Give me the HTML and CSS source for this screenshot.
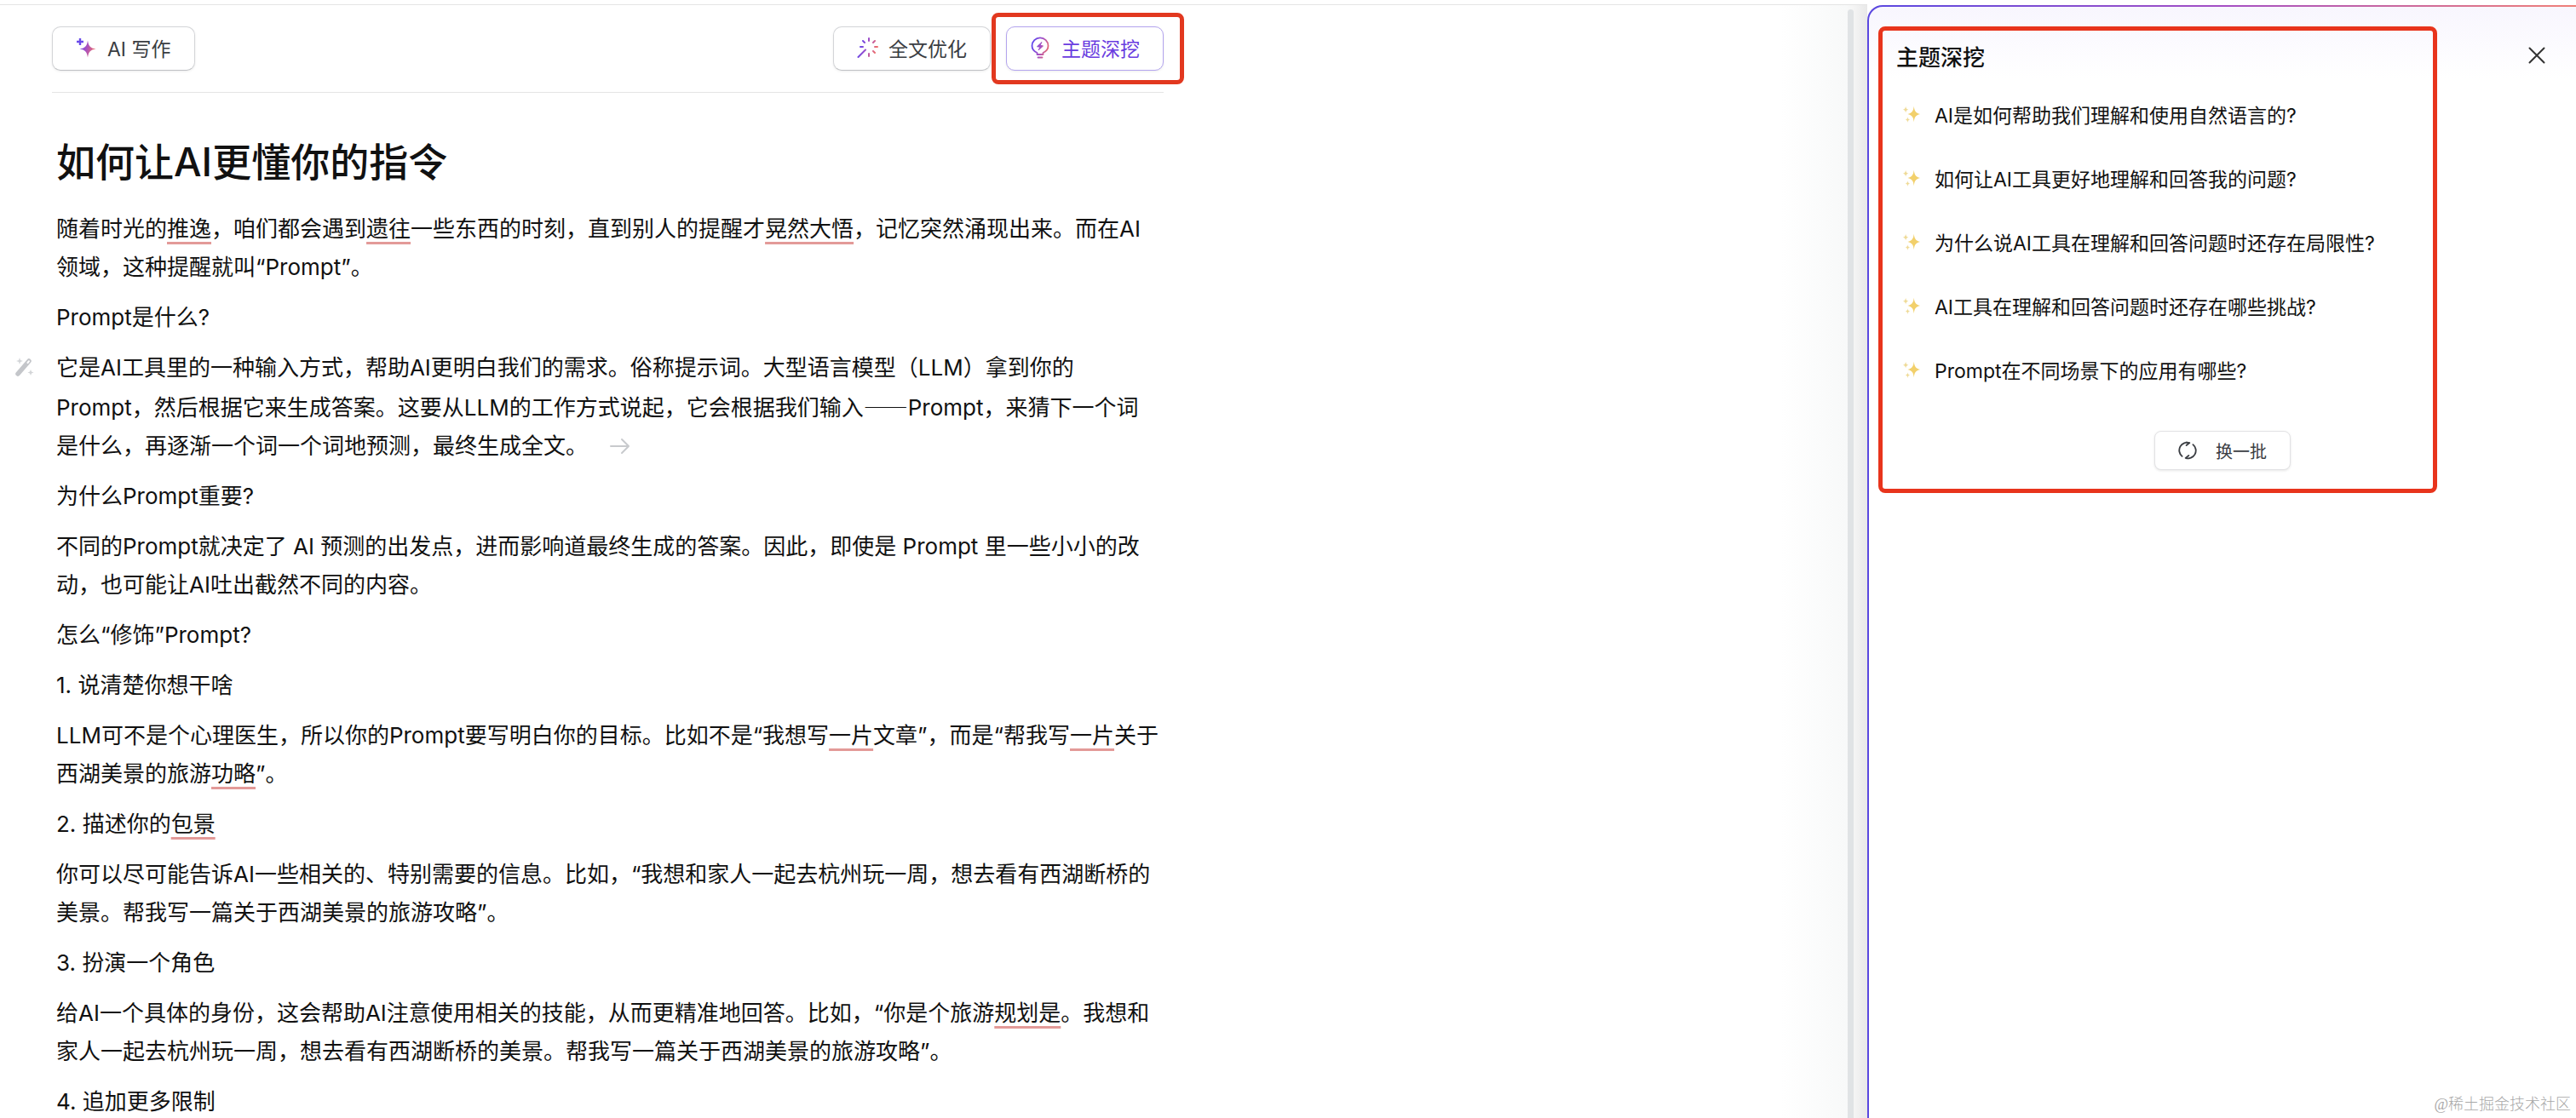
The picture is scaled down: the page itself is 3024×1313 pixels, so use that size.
FILE: index.html
```
<!DOCTYPE html>
<html lang="zh-CN">
<head>
  <meta charset="UTF-8" />
  <meta name="viewport" content="width=device-width, initial-scale=1.0"/>
  <title>如何让AI更懂你的指令</title>
  <link rel="stylesheet" href="styles.css">
</head>
<body>
  <!-- shared gradient and sparkle shape -->
  <svg class="defs" width="0" height="0" aria-hidden="true">
    <defs>
      <linearGradient id="brand" gradientUnits="userSpaceOnUse" x1="2" y1="8" x2="23" y2="14">
        <stop offset="0" stop-color="#5b45f0"/>
        <stop offset="0.5" stop-color="#a44fc4"/>
        <stop offset="1" stop-color="#f0706a"/>
      </linearGradient>
      <symbol id="sparkles" viewBox="0 0 24 24">
        <path fill="#f2d06b" d="M15 2c.8 6.200 2.200 8.600 8 10-5.800 1.400-7.200 3.800-8 10-.8-6.200-2.200-8.600-8-10 5.800-1.400 7.200-3.800 8-10z"/>
        <path fill="#efdb98" d="M4.500 2c.4 2.800 1.100 3.600 3.500 4.200-2.400.6-3.100 1.400-3.500 4.200C4.100 7.600 3.400 6.800 1 6.200 3.400 5.600 4.100 4.800 4.500 2z"/>
        <path fill="#efdb98" d="M7 15.500c.4 2.400 1 3.200 3 3.700-2 .5-2.600 1.300-3 3.700-.4-2.400-1-3.200-3-3.700 2-.5 2.600-1.300 3-3.700z"/>
      </symbol>
    </defs>
  </svg>

  <div class="app">
    <main class="editor">
      <div class="toolbar">
        <button class="btn" type="button">
          <svg class="icon" viewBox="0 0 24 24">
            <path fill="url(#brand)" d="M14 3.500c1 6.500 2.800 9 9.500 10-6.700 1-8.500 3.500-9.500 10-1-6.500-2.800-9-9.500-10 6.700-1 8.500-3.500 9.500-10z"/>
            <path fill="none" stroke="#6a4bea" stroke-width="2.400" d="M5 1v8M1 5h8"/>
          </svg>
          AI 写作
        </button>
        <div class="tools">
          <button class="btn" type="button">
            <svg class="icon" viewBox="0 0 24 24">
              <path fill="none" stroke="url(#brand)" stroke-width="2" stroke-linecap="round" d="M1.500 23l8.500-8.500M14 1v3M14 19v3M4 11h3M21 11.010h3M7 4l2 2M21 4l-2 2M21 18l-2-2"/>
            </svg>
            全文优化
          </button>
          <div class="mark">
            <button class="btn btn-active" type="button">
              <svg class="icon" viewBox="0 0 24 24">
                <path fill="none" stroke="url(#brand)" stroke-width="1.800" stroke-linecap="round" stroke-linejoin="round" d="M8.500 20v-2C5 16.500 2.500 13.500 2.500 9.800a9.500 9.500 0 0 1 19 0c0 3.700-2.500 6.700-6 8.200v2zM9.500 23.500h5"/>
                <path fill="url(#brand)" stroke="url(#brand)" stroke-linejoin="round" d="M14 5.500l-5.500 5.200 3.500.6-2 3.700 5.500-5-3.500-.8z"/>
              </svg>
              主题深挖
            </button>
          </div>
        </div>
      </div>

      <article class="doc">
        <h1>如何让AI更懂你的指令</h1>
        <p>随着时光的<u>推逸</u>，咱们都会遇到<u>遗往</u>一些东西的时刻，直到别人的提醒才<u>晃然大悟</u>，记忆突然涌现出来。而在AI领域，这种提醒就叫“Prompt”。</p>
        <p>Prompt是什么?</p>
        <p class="current">
          <svg class="wand" viewBox="0 0 24 24">
            <path stroke="#c4c6ca" stroke-width="5.500" stroke-linecap="round" d="M5 20L18 5"/>
            <path stroke="#fff" stroke-width="2" stroke-linecap="round" d="M16.500 7l1.500-1.800"/>
            <path fill="#d3d5d8" d="M7 1l1 3 3 1-3 1-1 3-1-3-3-1 3-1zM20 15l1 2.500 2.500 1-2.500 1-1 2.500-1-2.500-2.500-1 2.500-1z"/>
          </svg>
          它是AI工具里的一种输入方式，帮助AI更明白我们的需求。俗称提示词。大型语言模型（LLM）拿到你的Prompt，然后根据它来生成答案。这要从LLM的工作方式说起，它会根据我们输入<span class="dash">——</span>Prompt，来猜下一个词<br>是什么，再逐渐一个词一个词地预测，最终生成全文。<svg class="arrow" viewBox="0 0 24 24"><path fill="none" stroke="#c8cacd" stroke-width="2" stroke-linecap="round" stroke-linejoin="round" d="M1 12h21M14 4l8 8-8 8"/></svg>
        </p>
        <p>为什么Prompt重要?</p>
        <p>不同的Prompt就决定了 AI 预测的出发点，进而影响道最终生成的答案。因此，即使是 Prompt 里一些小小的改动，也可能让AI吐出截然不同的内容。</p>
        <p>怎么“修饰”Prompt?</p>
        <p>1. 说清楚你想干啥</p>
        <p>LLM可不是个心理医生，所以你的Prompt要写明白你的目标。比如不是“我想写<u>一片</u>文章”，而是“帮我写<u>一片</u>关于西湖美景的旅游<u>功略</u>”。</p>
        <p>2. 描述你的<u>包景</u></p>
        <p>你可以尽可能告诉AI一些相关的、特别需要的信息。比如，“我想和家人一起去杭州玩一周，想去看有西湖断桥的美景。帮我写一篇关于西湖美景的旅游攻略”。</p>
        <p>3. 扮演一个角色</p>
        <p>给AI一个具体的身份，这会帮助AI注意使用相关的技能，从而更精准地回答。比如，“你是个旅游<u>规划是</u>。我想和家人一起去杭州玩一周，想去看有西湖断桥的美景。帮我写一篇关于西湖美景的旅游攻略”。</p>
        <p>4. 追加更多限制</p>
      </article>
    </main>

    <div class="gutter"><div class="thumb"></div></div>

    <aside class="panel">
      <div class="panel-body">
        <header class="panel-head">
          <h2>主题深挖</h2>
          <button class="close" type="button" aria-label="关闭">
            <svg viewBox="0 0 20 20"><path fill="none" stroke="#333" stroke-width="2" stroke-linecap="round" d="M1.500 1.500l17 17M18.500 1.500l-17 17"/></svg>
          </button>
        </header>
        <ul class="topics">
          <li><svg class="spark"><use href="#sparkles"/></svg>AI是如何帮助我们理解和使用自然语言的?</li>
          <li><svg class="spark"><use href="#sparkles"/></svg>如何让AI工具更好地理解和回答我的问题?</li>
          <li><svg class="spark"><use href="#sparkles"/></svg>为什么说AI工具在理解和回答问题时还存在局限性?</li>
          <li><svg class="spark"><use href="#sparkles"/></svg>AI工具在理解和回答问题时还存在哪些挑战?</li>
          <li><svg class="spark"><use href="#sparkles"/></svg>Prompt在不同场景下的应用有哪些?</li>
        </ul>
        <button class="refresh" type="button">
          <svg viewBox="0 0 24 24"><path fill="none" stroke="#3a3d42" stroke-width="2" stroke-linecap="round" stroke-linejoin="round" d="M5 19.500A10 10 0 0 1 14.500 2.300M10.500 5.500l4-3.200-4.500-.6M19 4.500a10 10 0 0 1-9.500 17.200M13.500 18.500l-4 3.200 4.500.6"/></svg>
          换一批
        </button>
        <div class="panel-mark"></div>
      </div>
      <div class="watermark">@稀土掘金技术社区</div>
    </aside>
  </div>
</body>
</html>
```
FILE: styles.css
```
* {
  box-sizing: border-box;
}
body {
  margin: 0;
  background: #fff;
  color: #111;
  font-family: Inter, "Noto Sans CJK SC", sans-serif;
}
button {
  font-family: inherit;
  cursor: pointer;
}
.defs {
  position: absolute;
}
.app {
  display: flex;
  height: 100vh;
  padding-top: 5px;
  overflow: hidden;
}

/* editor */
.editor {
  flex: 1;
  border-top: 1px solid #e4e4e4;
}
.toolbar {
  display: flex;
  justify-content: space-between;
  align-items: center;
  max-width: 1305px;
  height: 103px;
  margin-left: 61px;
  border-bottom: 1px solid #e4e4e4;
}
.tools {
  display: flex;
  gap: 18px;
}
.btn {
  display: flex;
  align-items: center;
  gap: 13px;
  height: 52px;
  padding: 0 27px 2px;
  border: 1px solid #d4d5d8;
  border-bottom-color: #bfc0c4;
  border-radius: 10px;
  background: #fff;
  box-shadow: 0 1px 3px rgba(0, 0, 0, 0.08);
  color: #3a3d42;
  font-size: 23px;
}
.btn-active {
  border-color: #b3a4ee;
  color: #6a3de0;
}
.icon {
  width: 24px;
  height: 24px;
  overflow: visible;
}
.mark {
  position: relative;
}
.mark::after {
  content: "";
  position: absolute;
  inset: -16px -24px -16px -17px;
  border: 5px solid #e2381f;
  border-radius: 8px;
  pointer-events: none;
}

/* document */
.doc {
  max-width: 1364px;
  padding: 47px 0 0 66px;
  font-size: 26px;
  line-height: 45px;
}
.doc h1 {
  margin: 0 0 22px;
  font-size: 46px;
  font-weight: 500;
  line-height: 68px;
}
.doc p {
  margin: 0 0 14px;
}
.doc u {
  text-decoration: underline #e39a98 3px;
  text-underline-offset: 6px;
  text-decoration-skip-ink: none;
}
.dash {
  font-family: "Noto Sans CJK SC", sans-serif;
}
.current {
  position: relative;
}
.wand {
  position: absolute;
  left: -50px;
  top: 10px;
  width: 24px;
  height: 24px;
}
.arrow {
  width: 24px;
  height: 24px;
  margin-left: 26px;
  vertical-align: -3px;
}

/* scrollbar */
.gutter {
  width: 102px;
  padding: 5px 16px 0 0;
  border-top: 1px solid #e4e4e4;
  background: linear-gradient(to right, #fff, #f8f9f9 76%, #f4f4f4 85%, #e8e8e8);
}
.thumb {
  width: 7px;
  height: 100%;
  margin-left: auto;
  border-radius: 4px 4px 0 0;
  background: #e0e3e5;
}

/* side panel */
.panel {
  display: flex;
  flex-direction: column;
  justify-content: space-between;
  width: 832px;
  margin-top: 1px;
  border: solid transparent;
  border-width: 2px 0 0 2px;
  border-top-left-radius: 18px;
  background:
    linear-gradient(#f8f6fe, #fff 84px) padding-box,
    linear-gradient(to right, #5a48e0, #a44fc4 50%, #f08078) border-box;
}
.panel-body {
  position: relative;
  padding: 35px 32px 0;
}
.panel-head {
  display: flex;
  justify-content: space-between;
  align-items: center;
  height: 44px;
  padding-right: 4px;
}
.panel-head h2 {
  margin: 0;
  font-size: 26px;
  font-weight: 500;
}
.close {
  display: flex;
  padding: 0;
  border: 0;
  background: none;
}
.close svg {
  width: 20px;
  height: 20px;
}
.topics {
  margin: 9px 0 0;
  padding: 0;
  list-style: none;
}
.topics li {
  display: flex;
  align-items: center;
  gap: 16px;
  height: 75px;
  padding-left: 7px;
  font-size: 23px;
}
.spark {
  width: 22px;
  height: 22px;
}
.refresh {
  display: flex;
  align-items: center;
  gap: 22px;
  height: 46px;
  margin: 35px auto 0;
  padding: 0 27px;
  border: 1px solid #e2e2e4;
  border-radius: 8px;
  background: #fff;
  box-shadow: 0 1px 3px rgba(0, 0, 0, 0.1);
  color: #3a3d42;
  font-size: 20px;
}
.refresh svg {
  width: 22px;
  height: 22px;
}
.panel-mark {
  position: absolute;
  inset: 23px 163px -27px 11px;
  border: 5px solid #e8341c;
  border-radius: 8px;
  pointer-events: none;
}
.watermark {
  padding: 0 6px 5px;
  color: #a8a8a8;
  font-family: "Liberation Serif", "Noto Sans CJK SC", serif;
  font-size: 18px;
  font-weight: 300;
  text-align: right;
}
```
